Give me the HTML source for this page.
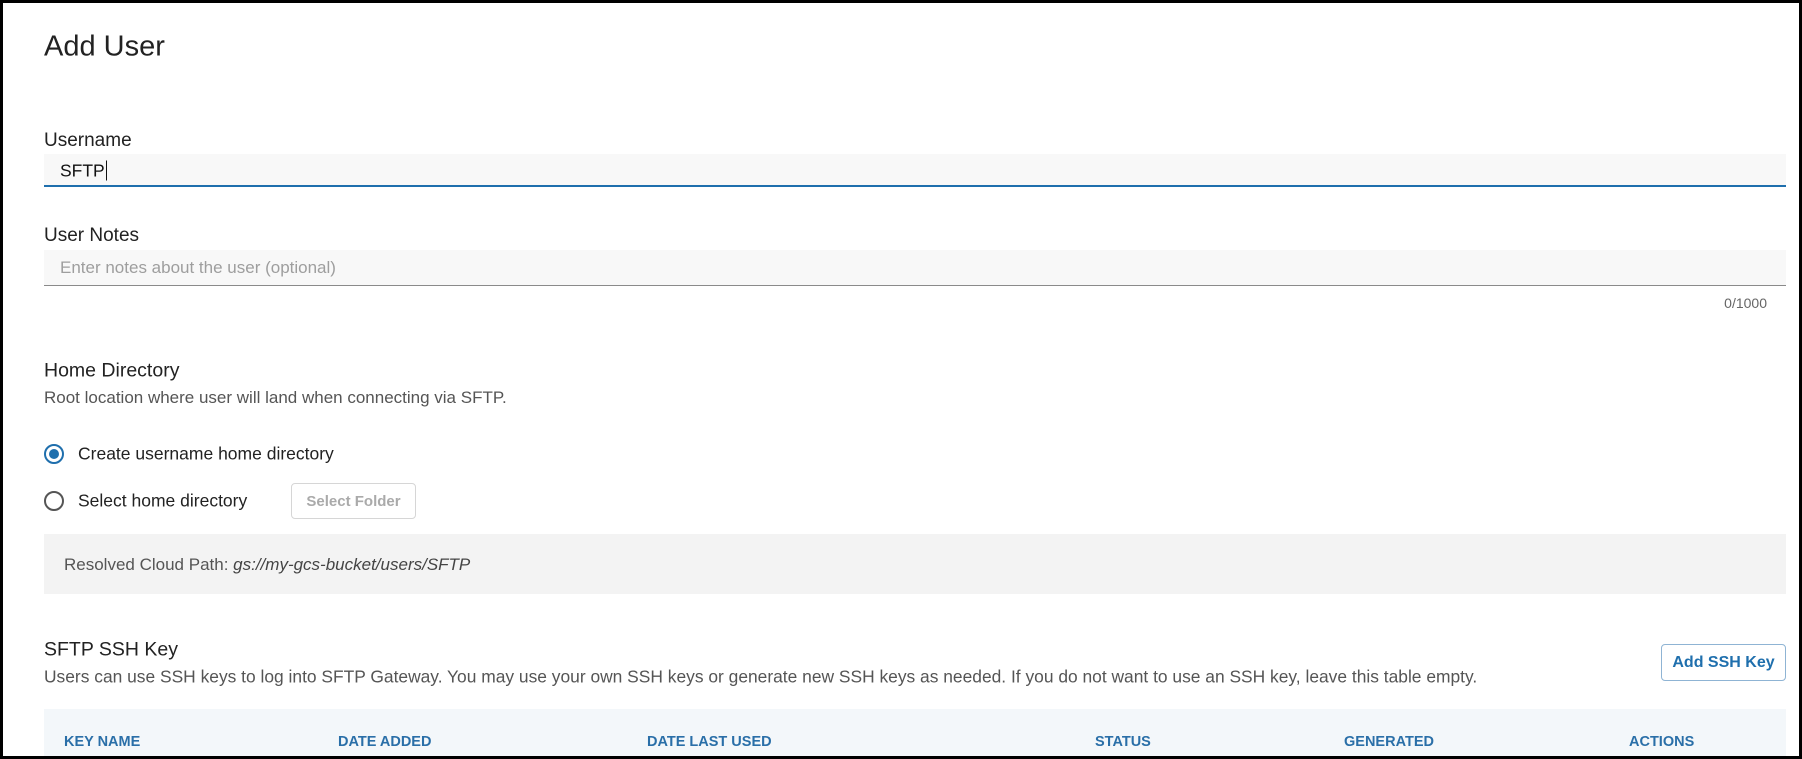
<!DOCTYPE html>
<html><head><meta charset="utf-8"><style>
*{margin:0;padding:0;box-sizing:border-box}
html,body{width:1802px;height:759px;overflow:hidden;background:#fff}
body{font-family:"Liberation Sans",Arial,sans-serif;color:#222;position:relative}
.frame{position:absolute;left:0;top:0;width:1802px;height:759px;border:3px solid #000}
.a{position:absolute;white-space:nowrap}
.mid{transform:translateY(-50%)}
.inp{position:absolute;left:44px;width:1742px;background:#f8f8f8}
.th{position:absolute;top:742px;transform:translateY(-50%);font-size:14.5px;font-weight:bold;color:#2a6fa8}
.btn{position:absolute;border:1px solid #d6d6d6;border-radius:4px;background:#fff;display:flex;align-items:center;justify-content:center;font-size:15px;font-weight:bold}
</style></head><body>
<div class="a mid" style="left:44px;top:47px;font-size:29px;color:#222">Add User</div>

<div class="a mid" style="left:44px;top:141px;font-size:19px">Username</div>
<div class="inp" style="top:154px;height:33px;border-bottom:2px solid #1f6fad"></div>
<div class="a mid" style="left:60px;top:171px;font-size:17.5px;color:#111">SFTP<span style="display:inline-block;width:1.5px;height:20px;background:#111;vertical-align:-4px;margin-left:1px"></span></div>

<div class="a mid" style="left:44px;top:236px;font-size:19px">User Notes</div>
<div class="inp" style="top:250px;height:36px;border-bottom:1px solid #8a8a8a"></div>
<div class="a mid" style="left:60px;top:268px;font-size:17px;color:#9e9e9e">Enter notes about the user (optional)</div>
<div class="a mid" style="right:35px;top:303px;font-size:14px;color:#666">0/1000</div>

<div class="a mid" style="left:44px;top:371px;font-size:19.5px">Home Directory</div>
<div class="a mid" style="left:44px;top:398px;font-size:17px;color:#555">Root location where user will land when connecting via SFTP.</div>

<div class="a" style="left:44px;top:444px;width:20px;height:20px;border:2px solid #1f6fad;border-radius:50%"></div>
<div class="a" style="left:49px;top:449px;width:10px;height:10px;background:#1f6fad;border-radius:50%"></div>
<div class="a mid" style="left:78px;top:454px;font-size:17.5px">Create username home directory</div>

<div class="a" style="left:44px;top:491px;width:20px;height:20px;border:2px solid #555;border-radius:50%"></div>
<div class="a mid" style="left:78px;top:501px;font-size:17.5px">Select home directory</div>
<div class="btn" style="left:291px;top:483px;width:125px;height:36px;color:#aaa">Select Folder</div>

<div class="a" style="left:44px;top:534px;width:1742px;height:60px;background:#f3f3f3"></div>
<div class="a mid" style="left:64px;top:565px;font-size:17px;color:#555">Resolved Cloud Path: <i style="color:#444">gs://my-gcs-bucket/users/SFTP</i></div>

<div class="a mid" style="left:44px;top:650px;font-size:19.5px">SFTP SSH Key</div>
<div class="a mid" style="left:44px;top:677px;font-size:17.4px;color:#555">Users can use SSH keys to log into SFTP Gateway. You may use your own SSH keys or generate new SSH keys as needed. If you do not want to use an SSH key, leave this table empty.</div>
<div class="btn" style="left:1661px;top:644px;width:125px;height:37px;border-color:#8fb4d4;color:#1f6fad;font-size:16px">Add SSH Key</div>

<div class="a" style="left:44px;top:709px;width:1742px;height:50px;background:#f3f7fa"></div>
<div class="th" style="left:64px">KEY NAME</div>
<div class="th" style="left:338px">DATE ADDED</div>
<div class="th" style="left:647px">DATE LAST USED</div>
<div class="th" style="left:1095px">STATUS</div>
<div class="th" style="left:1344px">GENERATED</div>
<div class="th" style="left:1629px">ACTIONS</div>

<div class="frame"></div>
</body></html>
